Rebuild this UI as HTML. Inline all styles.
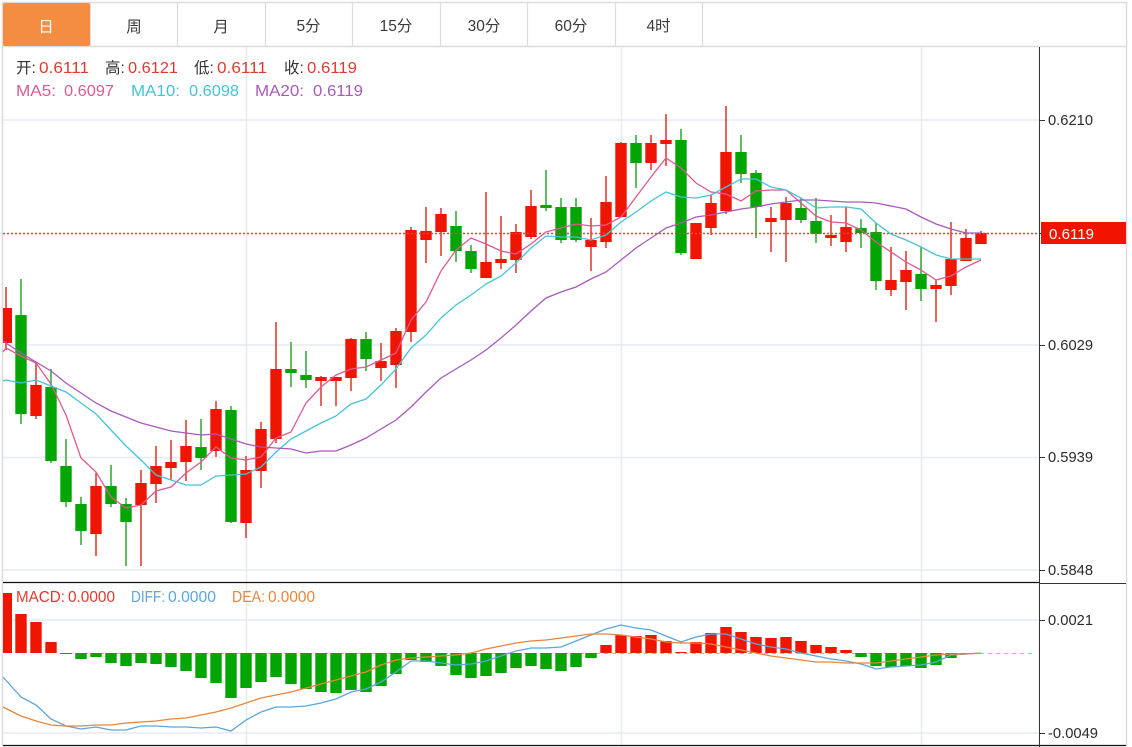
<!DOCTYPE html>
<html lang="zh">
<head>
<meta charset="utf-8">
<title>K线图</title>
<style>
html,body{margin:0;padding:0;background:#fff;width:1132px;height:747px;overflow:hidden}
svg{position:absolute;left:0;top:0;display:block}
text{font-family:"Liberation Sans","Noto Sans CJK SC",sans-serif}
.tab{font-size:15.5px;fill:#3a3a3a;text-anchor:middle}
.ax{font-size:14.6px;fill:#2b2b2b}
.lg{font-size:16px}
.lm{font-size:15.5px}
</style>
</head>
<body>
<svg width="1132" height="747" viewBox="0 0 1132 747" xmlns="http://www.w3.org/2000/svg">
<!-- frame -->
<path d="M2.5 2.5H1126.5V746M2.5 2.5V746M3 46.5H1126" fill="none" stroke="#dcdcdc" stroke-width="1.5"/>
<!-- tabs -->
<path d="M90.5 3V46M177.5 3V46M265.5 3V46M352.5 3V46M440.5 3V46M527.5 3V46M615.5 3V46M702.5 3V46" stroke="#dcdcdc" stroke-width="1.2" fill="none"/>
<rect x="3" y="3" width="87" height="43" rx="2" fill="#f48c42"/>
<text class="tab" x="46" y="32" style="fill:#fff">日</text>
<text class="tab" x="134" y="32">周</text>
<text class="tab" x="221" y="32">月</text>
<text class="tab" x="308.5" y="31">5分</text>
<text class="tab" x="396" y="31">15分</text>
<text class="tab" x="484" y="31">30分</text>
<text class="tab" x="571" y="31">60分</text>
<text class="tab" x="658.5" y="31">4时</text>
<!-- grid -->
<path d="M3 120H1039M3 345H1039M3 457.5H1039M3 570H1039M3 620H1039M3 733H1039M246.5 47V745M621.5 47V745M921.5 47V745" stroke="#e5ecf2" stroke-width="1.5" fill="none"/>
<!-- MACD baseline -->
<path d="M60 653.5H1036" stroke="#7fcde3" stroke-width="1.1" stroke-dasharray="4 4" fill="none"/>
<!-- wicks red -->
<path d="M6 287V350M36 363V419M96 473V556M141 470V566M156 446V503M171 440V480M186 420V481M216 401V457M246 456V538M261 422V488M276 322V443M321 376V406M336 377V406M351 338V391M381 343V381M396 328V388M411 227V342M426 207V263M441 208V256M486 192V278M501 216V269M516 224V273M531 190V239M591 218V271M606 176V248M621 142V217M651 135V170M666 114V166M711 195V235M726 106V214M771 207V252M786 197V262M831 215V246M846 207V252M891 247V296M906 251V310M936 280V322M951 222V295M966 229V261M981 231V244" stroke="#de3327" stroke-width="1.5" fill="none"/>
<!-- wicks green -->
<path d="M21 279V424M51 369V463M66 439V507M81 497V545M111 465V507M126 498V566M201 419V470M231 406V523M291 342V387M306 351V388M366 332V371M456 211V262M471 245V273M546 170V211M561 198V243M576 198V242M636 135V188M681 129V255M741 135V183M756 170V238M801 198V223M816 198V243M861 219V248M876 223V290M921 247V301" stroke="#2ea52e" stroke-width="1.5" fill="none"/>
<!-- bodies red -->
<rect x="3" y="308" width="9" height="35" fill="#f01500"/>
<path d="M36 385V416M96 486V534M141 483V505M156 466V484M171 462V468M186 446V462M216 409V451M246 470V523M261 429V471M276 369V439M321 377V381M336 377V381M351 339V378M381 361V368M396 331V365M411 230V332M426 231V240M441 214V232M486 262V278M501 259V263M516 232V260M531 206V237M591 240V247M606 202V242M621 143V217M651 143V163M666 140V144M696 223V259M711 203V228M726 152V211M771 218V222M786 203V220M831 235V238M846 227V242M891 280V290M906 270V282M936 285V289M951 259V286M966 238V261M981 233V244" stroke="#f01500" stroke-width="11.4" fill="none"/>
<!-- bodies green -->
<path d="M21 315V414M51 387V461M66 466V502M81 504V531M111 486V504M126 504V522M201 447V458M231 410V522M291 369V373M306 375V380M366 339V359M456 226V251M471 251V269M546 205V208M561 207V240M576 207V240M636 143V163M681 140V253M741 152V174M756 173V207M801 208V220M816 221V234M861 228V233M876 232V281M921 274V289" stroke="#02a502" stroke-width="11.4" fill="none"/>
<!-- last price line -->
<path d="M3 233.5H1040" stroke="#e6403a" stroke-width="1.5" stroke-dasharray="2 2" fill="none"/>
<!-- MA lines -->
<polyline fill="none" stroke="#dd5a90" stroke-width="1.3" points="3,352 6,348 21,356 36,363 51,384 66,415 81,458 96,472 111,497 126,508 141,505 156,491 171,487 186,473 201,462 216,447 231,458 246,460 261,457 276,438 291,432 306,403 321,387 336,375 351,369 366,367 381,360 396,353 411,320 426,302 441,271 456,250 471,238 486,244 501,251 516,254 531,244 546,232 561,228 576,224 591,226 606,225 621,217 636,197 651,177 666,158 681,168 696,183 711,192 726,194 741,201 756,191 771,190 786,190 801,203 816,216 831,222 846,223 861,230 876,242 891,252 906,262 921,270 936,280 951,276 966,267 981,260"/>
<polyline fill="none" stroke="#45c3d8" stroke-width="1.3" points="3,381 6,380 21,383 36,380 51,386 66,392 81,403 96,414 111,430 126,446 141,460 156,475 171,480 186,485 201,485 216,476 231,475 246,474 261,467 276,452 291,439 306,431 321,423 336,416 351,404 366,399 381,385 396,369 411,348 426,335 441,318 456,305 471,295 486,284 501,276 516,263 531,248 546,236 561,237 576,237 591,240 606,235 621,222 636,212 651,201 666,192 681,197 696,198 711,195 726,187 741,179 756,179 771,187 786,190 801,198 816,208 831,207 846,207 861,209 876,223 891,234 906,240 921,247 936,255 951,259 966,259 981,259"/>
<polyline fill="none" stroke="#a85abb" stroke-width="1.3" points="3,341 21,353 36,362 51,371 66,383 81,393 96,403 111,411 126,417 141,423 156,427 171,431 186,433 201,435 216,434 231,439 246,444 261,447 276,448 291,449 306,453 321,451 336,451 351,445 366,438 381,429 396,420 411,407 426,392 441,378 456,369 471,360 486,350 501,338 516,325 531,311 546,298 561,292 576,287 591,279 606,272 621,260 636,248 651,238 666,228 681,223 696,217 711,215 726,212 741,209 756,207 771,204 786,202 801,200 816,200 831,201 846,202 861,202 876,203 891,206 906,209 921,217 936,224 951,229 966,233 981,233"/>
<!-- MACD bars -->
<rect x="3" y="593" width="9" height="60" fill="#f01500"/>
<path d="M21 653V614M36 653V622M51 653V642M606 653V645M621 653V635M636 653V636M651 653V635M666 653V641M681 653V652M696 653V642M711 653V633M726 653V627M741 653V632M756 653V637M771 653V638M786 653V637M801 653V641M816 653V645M831 653V647M846 653V650" stroke="#f01500" stroke-width="11.4" fill="none"/>
<path d="M66 653V654M81 653V659M96 653V657M111 653V663M126 653V666M141 653V663M156 653V664M171 653V667M186 653V671M201 653V678M216 653V683M231 653V698M246 653V688M261 653V682M276 653V677M291 653V684M306 653V689M321 653V692M336 653V693M351 653V690M366 653V692M381 653V686M396 653V674M411 653V660M426 653V662M441 653V666M456 653V675M471 653V678M486 653V676M501 653V673M516 653V668M531 653V666M546 653V669M561 653V671M576 653V667M591 653V658M861 653V657M876 653V666M891 653V667M906 653V666M921 653V668M936 653V665M951 653V658M966 653V654" stroke="#02a502" stroke-width="11.4" fill="none"/>
<!-- DIFF / DEA -->
<polyline fill="none" stroke="#5ba6de" stroke-width="1.3" points="3,677 21,697 36,705 51,719 66,726 81,729 96,727 111,730 126,730 141,726 156,726 171,727 186,727 201,728 216,727 231,731 246,720 261,712 276,707 291,707 306,706 321,703 336,699 351,692 366,689 381,682 396,672 411,661 426,661 441,663 456,665 471,664 486,661 501,656 516,651 531,648 546,648 561,647 576,641 591,635 606,629 621,625 636,628 651,630 666,636 681,642 696,637 711,634 726,634 741,639 756,644 771,647 786,649 801,653 816,656 831,659 846,661 861,664 876,669 891,667 906,666 921,665 936,662 951,655 966,654 981,653"/>
<polyline fill="none" stroke="#e9853a" stroke-width="1.3" points="3,707 21,716 36,721 51,725 66,726 81,726 96,725 111,725 126,723 141,722 156,721 171,719 186,718 201,715 216,712 231,708 246,703 261,698 276,695 291,692 306,688 321,684 336,680 351,676 366,672 381,665 396,660 411,658 426,657 441,656 456,655 471,653 486,649 501,646 516,643 531,641 546,640 561,638 576,636 591,634 606,634 621,635 636,637 651,639 666,642 681,643 696,643 711,644 726,647 741,650 756,653 771,656 786,658 801,660 816,662 831,662 846,663 861,663 876,663 891,661 906,659 921,657 936,655 951,654 966,654 981,653"/>
<!-- axes -->
<path d="M3 582.5H1039M3 745.5H1126" stroke="#111" stroke-width="1.2" fill="none"/>
<path d="M1039.5 47V747M1040 583.5H1126M1040 120.5H1045M1040 233.5H1045M1040 345.5H1045M1040 457.5H1045M1040 570.5H1045M1040 620.5H1045M1040 733.5H1045" stroke="#333" stroke-width="1" fill="none"/>
<rect x="1041" y="222" width="85" height="22" fill="#f11500"/>
<text class="ax" x="1048" y="125" textLength="45" lengthAdjust="spacingAndGlyphs">0.6210</text>
<text class="ax" x="1049" y="239" textLength="45" lengthAdjust="spacingAndGlyphs" style="fill:#fff">0.6119</text>
<text class="ax" x="1048" y="350" textLength="45" lengthAdjust="spacingAndGlyphs">0.6029</text>
<text class="ax" x="1048" y="462" textLength="45" lengthAdjust="spacingAndGlyphs">0.5939</text>
<text class="ax" x="1048" y="575" textLength="45" lengthAdjust="spacingAndGlyphs">0.5848</text>
<text class="ax" x="1048" y="625" textLength="45" lengthAdjust="spacingAndGlyphs">0.0021</text>
<text class="ax" x="1048" y="738" textLength="50" lengthAdjust="spacingAndGlyphs">-0.0049</text>
<!-- legend -->
<g class="lg" fill="#e03a2f">
<text x="16" y="73" style="fill:#333;font-size:15.5px">开:</text><text x="39" y="73" textLength="50" lengthAdjust="spacingAndGlyphs">0.6111</text>
<text x="105" y="73" style="fill:#333;font-size:15.5px">高:</text><text x="128" y="73" textLength="50" lengthAdjust="spacingAndGlyphs">0.6121</text>
<text x="194" y="73" style="fill:#333;font-size:15.5px">低:</text><text x="217" y="73" textLength="50" lengthAdjust="spacingAndGlyphs">0.6111</text>
<text x="284" y="73" style="fill:#333;font-size:15.5px">收:</text><text x="307" y="73" textLength="50" lengthAdjust="spacingAndGlyphs">0.6119</text>
</g>
<g class="lg">
<text x="16" y="96" fill="#dd5a90" textLength="40" lengthAdjust="spacingAndGlyphs">MA5:</text><text x="64" y="96" fill="#dd5a90" textLength="50" lengthAdjust="spacingAndGlyphs">0.6097</text>
<text x="131" y="96" fill="#45c3d8" textLength="49" lengthAdjust="spacingAndGlyphs">MA10:</text><text x="189" y="96" fill="#45c3d8" textLength="50" lengthAdjust="spacingAndGlyphs">0.6098</text>
<text x="255" y="96" fill="#a85abb" textLength="49" lengthAdjust="spacingAndGlyphs">MA20:</text><text x="313" y="96" fill="#a85abb" textLength="50" lengthAdjust="spacingAndGlyphs">0.6119</text>
</g>
<g class="lm">
<text x="16" y="602" fill="#e03a2f" textLength="49" lengthAdjust="spacingAndGlyphs">MACD:</text><text x="68" y="602" fill="#e03a2f" textLength="47" lengthAdjust="spacingAndGlyphs">0.0000</text>
<text x="131" y="602" fill="#5ba6de" textLength="34" lengthAdjust="spacingAndGlyphs">DIFF:</text><text x="168" y="602" fill="#5ba6de" textLength="48" lengthAdjust="spacingAndGlyphs">0.0000</text>
<text x="232" y="602" fill="#e9853a" textLength="33" lengthAdjust="spacingAndGlyphs">DEA:</text><text x="268" y="602" fill="#e9853a" textLength="47" lengthAdjust="spacingAndGlyphs">0.0000</text>
</g>
</svg>
</body>
</html>
